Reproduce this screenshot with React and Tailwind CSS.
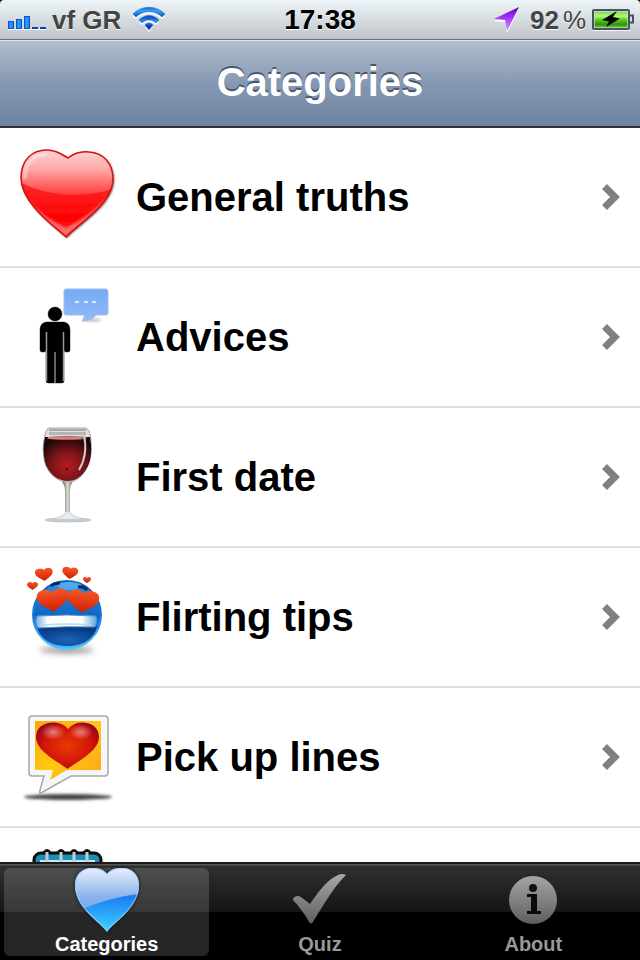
// src/App.jsx
import React, { useState } from "react";

const HEART = "M50 100 C40 88 0 64 0 32 C0 12 12 1 27 1 C38 1 46 6 51 15 C57 5 65 1 75 1 C90 2 100 14 100 32 C100 64 60 88 50 100Z";

const MiniHeart = ({ x, y, w, h, fill }) => (
  <svg x={x} y={y} width={w} height={h} viewBox="0 0 100 100" preserveAspectRatio="none">
    <path d={HEART} fill={fill} />
  </svg>
);

const HeartIcon = () => (
  <svg viewBox="0 0 96 96" className="w-24 h-24 overflow-visible" aria-hidden="true">
    <defs>
      <linearGradient id="heartBody" x1="0" y1="0" x2="0" y2="1">
        <stop offset="0" stopColor="#ff4040" />
        <stop offset="0.5" stopColor="#ff1c1c" />
        <stop offset="0.8" stopColor="#fd0000" />
        <stop offset="1" stopColor="#ff3030" />
      </linearGradient>
      <linearGradient id="heartShine" x1="0" y1="0" x2="0" y2="46" gradientUnits="userSpaceOnUse">
        <stop offset="0" stopColor="#ffd6d6" />
        <stop offset="0.45" stopColor="#ffa6a6" />
        <stop offset="1" stopColor="#ff3c3c" />
      </linearGradient>
      <clipPath id="heartClip">
        <path d="M46 88 C38 80 1 55 1 29 C1 11 12 1 27 1 C37 1 44 7 48 9 C53 5 60 2 69 3 C84 4 93 15 93 30 C93 55 58 75 46 88Z" />
      </clipPath>
      <filter id="heartShadow" x="-10%" y="-10%" width="125%" height="125%">
        <feDropShadow dx="1" dy="1" stdDeviation="0.8" floodColor="#300" floodOpacity="0.8" />
      </filter>
      <filter id="heartGlow">
        <feGaussianBlur stdDeviation="1.2" />
      </filter>
    </defs>
    <path
      d="M46 88 C38 80 1 55 1 29 C1 11 12 1 27 1 C37 1 44 7 48 9 C53 5 60 2 69 3 C84 4 93 15 93 30 C93 55 58 75 46 88Z"
      fill="url(#heartBody)"
      filter="url(#heartShadow)"
    />
    <g clipPath="url(#heartClip)">
      <path d="M0 0 H96 V38 C80 47 30 51 0 33Z" fill="url(#heartShine)" />
      <path
        d="M6 48 C20 66 34 72 46 79 C60 71 76 62 88 46 C80 64 60 76 46 87 C32 78 14 66 6 48Z"
        fill="#ff8c8c"
        opacity="0.7"
        filter="url(#heartGlow)"
      />
      <path d="M5 30 C4 15 13 5 27 5" fill="none" stroke="#fff" strokeWidth="3" opacity="0.5" filter="url(#heartGlow)" />
    </g>
    <path
      d="M46 88 C38 80 1 55 1 29 C1 11 12 1 27 1 C37 1 44 7 48 9 C53 5 60 2 69 3 C84 4 93 15 93 30 C93 55 58 75 46 88Z"
      fill="none"
      stroke="#d41212"
      strokeWidth="1.5"
    />
  </svg>
);

const AdviceIcon = () => (
  <svg viewBox="0 0 96 96" className="w-24 h-24 overflow-visible" aria-hidden="true">
    <defs>
      <linearGradient id="bubble" x1="0" y1="0" x2="0" y2="1">
        <stop offset="0" stopColor="#75abf3" />
        <stop offset="1" stopColor="#91bafa" />
      </linearGradient>
      <filter id="softShadow" x="-50%" y="-200%" width="200%" height="500%">
        <feGaussianBlur stdDeviation="1.5" />
      </filter>
    </defs>
    <ellipse cx="72" cy="31" rx="9" ry="1" fill="#999" filter="url(#softShadow)" />
    <path
      d="M46 0 H86 Q88 0 88 2 V24 Q88 26 86 26 H76 C73 30 69 32 62 32 Q65 29 64 26 H46 Q44 26 44 24 V2 Q44 0 46 0Z"
      fill="url(#bubble)"
      stroke="#9dbdf0"
      strokeWidth="1"
    />
    <path d="M55 13 h4 M64 13 h4 M72 13 h4" stroke="#dcecff" strokeWidth="2" />
    <g stroke="#999" strokeWidth="1" paintOrder="stroke">
      <circle cx="35" cy="25" r="7" />
      <path d="M26 33 H44 Q50 34 50 41 V61 Q50 63 48 63 H46 Q44 63 44 61 V92 Q44 94 41 94 H29 Q26 94 26 92 V61 Q26 63 24 63 H22 Q20 63 20 61 V41 Q20 34 26 33Z" />
    </g>
    <path d="M26.5 43 V92 M43.5 43 V92" stroke="#999" strokeWidth="1.5" />
    <path d="M35 63 V94" stroke="#666" strokeWidth="2" />
  </svg>
);

const WineIcon = () => (
  <svg viewBox="0 0 96 96" className="w-24 h-24 overflow-visible" aria-hidden="true">
    <defs>
      <radialGradient id="wine" cx="0.5" cy="0.65" r="0.65">
        <stop offset="0" stopColor="#b51c22" />
        <stop offset="0.5" stopColor="#7d1418" />
        <stop offset="1" stopColor="#1c0808" />
      </radialGradient>
      <linearGradient id="stem" x1="0" y1="0" x2="1" y2="0">
        <stop offset="0" stopColor="#55554f" />
        <stop offset="0.5" stopColor="#d8d8d2" />
        <stop offset="1" stopColor="#77776f" />
      </linearGradient>
    </defs>
    <ellipse cx="48" cy="91" rx="23" ry="2" fill="#c5ccd0" stroke="#b5bcc0" strokeWidth="0.7" />
    <path d="M32 90 Q44 88 47 82 H49 Q52 88 64 90" fill="#e6eaec" stroke="#b5bcc0" strokeWidth="0.7" />
    <path d="M42 52 H53 Q50 57 50 62 V83 H45 V62 Q45 57 42 52Z" fill="url(#stem)" />
    <path
      d="M29 -1 H66 Q69 0 70 5 C72 16 72 27 68 36 C64 47 56 53 48 53 C38 53 28 45 25 34 C22 23 23 12 26 3 Q27 -1 29 -1Z"
      fill="#dfdfdf"
      stroke="#a5a5a5"
      strokeWidth="1"
    />
    <path d="M25 8 H70 C73 25 70 35 65 42 C60 49 54 52 48 52 C37 52 28 44 25 33 C23 25 23 16 25 8Z" fill="url(#wine)" />
    <path d="M29 3 H66 V6 H29Z" fill="#b5b5b5" />
    <path d="M29 1 H66" stroke="#999" strokeWidth="1.5" />
    <ellipse cx="47" cy="9" rx="20" ry="2" fill="#b9575a" />
    <path d="M28 9 H61" stroke="#eab4b4" strokeWidth="1" />
    <path d="M64 6 C67 20 65 31 59 41" fill="none" stroke="#d6c8c8" strokeWidth="2" />
    <circle cx="47" cy="40" r="1.5" fill="#6a0508" />
  </svg>
);

const SmileyIcon = () => (
  <svg viewBox="0 0 96 96" className="w-24 h-24 overflow-visible" aria-hidden="true">
    <defs>
      <linearGradient id="face" x1="0" y1="0" x2="0" y2="1">
        <stop offset="0" stopColor="#2c8fe2" />
        <stop offset="0.5" stopColor="#0f66c6" />
        <stop offset="0.85" stopColor="#168bea" />
        <stop offset="1" stopColor="#4cc4ff" />
      </linearGradient>
      <linearGradient id="rim" x1="0" y1="0" x2="0" y2="1">
        <stop offset="0" stopColor="#1a62b4" />
        <stop offset="0.5" stopColor="#1b7edd" />
        <stop offset="1" stopColor="#4fc6ff" />
      </linearGradient>
      <radialGradient id="mouth" cx="0.5" cy="0.7" r="0.6">
        <stop offset="0" stopColor="#1a66b8" />
        <stop offset="1" stopColor="#0a3a86" />
      </radialGradient>
      <linearGradient id="love" x1="0" y1="0" x2="0" y2="1">
        <stop offset="0" stopColor="#f4572c" />
        <stop offset="0.5" stopColor="#e63a12" />
        <stop offset="1" stopColor="#c02408" />
      </linearGradient>
      <linearGradient id="teeth" x1="0" y1="0" x2="1" y2="0">
        <stop offset="0" stopColor="#6fb0e2" />
        <stop offset="0.2" stopColor="#fff" />
        <stop offset="0.75" stopColor="#fff" />
        <stop offset="1" stopColor="#5fa3dc" />
      </linearGradient>
      <filter id="faceShadow" x="-50%" y="-200%" width="200%" height="500%">
        <feGaussianBlur stdDeviation="3" />
      </filter>
    </defs>
    <ellipse cx="47" cy="81" rx="27" ry="3" fill="#888" filter="url(#faceShadow)" />
    <circle cx="47" cy="46" r="34" fill="url(#face)" stroke="url(#rim)" strokeWidth="2" />
    <ellipse cx="50" cy="17" rx="12" ry="4" fill="#5cb8f5" opacity="0.7" />
    <path d="M31 17 Q34 14 40 14 M58 18 Q64 17 67 21" fill="none" stroke="#082d5b" strokeWidth="3" />
    <path d="M17 57 C20 71 33 77 47 77 C61 77 74 71 77 57Z" fill="url(#mouth)" />
    <path d="M17 47 Q47 45 76 47 Q78 52 75 58 Q47 57 18 59 Q14 53 17 47Z" fill="url(#teeth)" stroke="#4f92cc" strokeWidth="1" />
    <path d="M23 56 Q47 54 71 56" fill="none" stroke="#bcd8ed" strokeWidth="1.5" />
    <g transform="rotate(-6 32 32)">
      <MiniHeart x="17" y="20" w="32" h="23" fill="url(#love)" />
    </g>
    <g transform="rotate(6 63 32)">
      <MiniHeart x="47" y="21" w="32" h="23" fill="url(#love)" />
    </g>
    <g transform="rotate(-6 24 5)">
      <MiniHeart x="15" y="-1" w="18" h="13" fill="url(#love)" />
    </g>
    <g transform="rotate(6 50 4)">
      <MiniHeart x="42" y="-2" w="16" h="12" fill="url(#love)" />
    </g>
    <MiniHeart x="7" y="13" w="11" h="8" fill="url(#love)" />
    <MiniHeart x="63" y="8" w="8" h="6" fill="url(#love)" />
  </svg>
);

const LinesIcon = () => (
  <svg viewBox="0 0 96 96" className="w-24 h-24 overflow-visible" aria-hidden="true">
    <defs>
      <linearGradient id="card" x1="0" y1="0" x2="1" y2="1">
        <stop offset="0" stopColor="#ffa50a" />
        <stop offset="0.5" stopColor="#ffc90f" />
        <stop offset="1" stopColor="#ffa21a" />
      </linearGradient>
      <radialGradient id="cardHeart" cx="0.5" cy="0.5" r="0.58">
        <stop offset="0" stopColor="#e63b04" />
        <stop offset="0.65" stopColor="#d31408" />
        <stop offset="1" stopColor="#960519" />
      </radialGradient>
      <radialGradient id="gloss">
        <stop offset="0" stopColor="#fff" stopOpacity="0.45" />
        <stop offset="1" stopColor="#fff" stopOpacity="0" />
      </radialGradient>
      <filter id="cardShadow" x="-20%" y="-200%" width="140%" height="500%">
        <feGaussianBlur stdDeviation="1.5" />
      </filter>
    </defs>
    <ellipse cx="48" cy="88" rx="44" ry="3" fill="#444" filter="url(#cardShadow)" />
    <path
      d="M12 7 H85 Q88 7 88 10 V63 Q88 67 85 67 H51 L21 84 Q19 85 20 81 L24 67 H12 Q9 67 9 64 V10 Q9 7 12 7Z"
      fill="#f4f6fa"
      stroke="#a8a8a8"
      strokeWidth="1.5"
    />
    <path d="M15 12 H81 V61 H47 L30 71 L33 61 H15Z" fill="url(#card)" />
    <MiniHeart x="16" y="13" w="63" h="47" fill="url(#cardHeart)" />
    <ellipse cx="33" cy="23" rx="12" ry="8" fill="url(#gloss)" />
    <ellipse cx="61" cy="23" rx="12" ry="8" fill="url(#gloss)" />
  </svg>
);

const NotebookIcon = () => (
  <svg viewBox="0 0 96 96" className="w-24 h-24 overflow-visible" aria-hidden="true">
    <rect x="14" y="4" width="67" height="86" rx="7" fill="#1d8fb5" stroke="#0a0a0a" strokeWidth="3" />
    <rect x="20" y="11" width="55" height="73" fill="#cfe3ea" />
    {[27, 41, 54, 67].map((x) => (
      <g key={x}>
        <path d={`M${x - 3} 4 Q${x} -1 ${x + 3} 4`} fill="none" stroke="#0a0a0a" strokeWidth="3" />
        <path d={`M${x} 3 V14`} stroke="#c5ced2" strokeWidth="3" />
      </g>
    ))}
  </svg>
);

const Chevron = () => (
  <svg viewBox="0 0 18 26" className="w-[18px] h-[26px] shrink-0" aria-hidden="true">
    <path d="M2.5 2.5 L13 13 L2.5 23.5" fill="none" stroke="#808080" strokeWidth="7" />
  </svg>
);

const SignalIcon = () => (
  <svg viewBox="0 0 38 16" className="w-[38px] h-4" aria-hidden="true">
    <defs>
      <linearGradient id="bar" x1="0" y1="0" x2="1" y2="0">
        <stop offset="0" stopColor="#1b7cf0" />
        <stop offset="0.5" stopColor="#28a0ff" />
        <stop offset="1" stopColor="#1670e8" />
      </linearGradient>
    </defs>
    <path d="M0 15.5 H38" stroke="#fff" strokeWidth="1" />
    <g fill="url(#bar)" stroke="#0a55c8" strokeWidth="1">
      <rect x="0.5" y="7.5" width="5" height="7" />
      <rect x="8.5" y="5.5" width="5" height="9" />
      <rect x="16.5" y="2.5" width="5" height="12" />
    </g>
    <path d="M24 14 h6 M32 14 h6" stroke="#0a3fc0" strokeWidth="2" />
  </svg>
);

const WAVES =
  "M0 7 C9 -2 23 -2 32 7 L29 10 C22 3 10 3 3 10Z M6 13 C12 7 20 7 26 13 L23 16 C19 12 13 12 9 16Z M12 18 Q16 14 20 18 L16 23Z";

const WifiIcon = () => (
  <svg viewBox="0 0 32 26" className="w-8 h-[26px]" aria-hidden="true">
    <defs>
      <linearGradient id="wifi" x1="0" y1="0" x2="0" y2="26" gradientUnits="userSpaceOnUse">
        <stop offset="0" stopColor="#0d5fd0" />
        <stop offset="0.15" stopColor="#3aa5f5" />
        <stop offset="0.38" stopColor="#0c4cc4" />
        <stop offset="0.55" stopColor="#2b93f4" />
        <stop offset="0.75" stopColor="#0838b4" />
        <stop offset="1" stopColor="#1668e0" />
      </linearGradient>
    </defs>
    <path d={WAVES} fill="#fff" transform="translate(0 2)" />
    <path d={WAVES} fill="url(#wifi)" stroke="#0d56c8" strokeWidth="0.5" />
  </svg>
);

const LocationIcon = () => (
  <svg viewBox="0 0 26 26" className="w-[26px] h-[26px]" aria-hidden="true">
    <defs>
      <linearGradient id="arrow" x1="0" y1="0" x2="0" y2="1">
        <stop offset="0" stopColor="#5c00c8" />
        <stop offset="0.45" stopColor="#a536f5" />
        <stop offset="1" stopColor="#d893ff" />
      </linearGradient>
    </defs>
    <path d="M25 2 L13 26 L11 15 L0 14Z" fill="#fff" />
    <path d="M25 0 L13 24 L11 13 L0 12Z" fill="url(#arrow)" />
  </svg>
);

const BatteryIcon = () => (
  <svg viewBox="0 0 42 22" className="w-[42px] h-[22px]" aria-hidden="true">
    <defs>
      <linearGradient id="charge" x1="0" y1="0" x2="0" y2="1">
        <stop offset="0" stopColor="#7ed957" />
        <stop offset="0.3" stopColor="#b4f77c" />
        <stop offset="0.5" stopColor="#62cf26" />
        <stop offset="0.8" stopColor="#37910b" />
        <stop offset="1" stopColor="#5cc425" />
      </linearGradient>
    </defs>
    <path d="M1 21 H38" stroke="#fff" strokeWidth="1.5" />
    <rect x="1" y="1" width="36" height="19" rx="1" fill="#e6ebee" stroke="#4b5068" strokeWidth="2" />
    <rect x="2.5" y="2.5" width="33" height="16" fill="url(#charge)" />
    <path d="M38 6.5 h3 v7 h-3" fill="none" stroke="#4b5068" strokeWidth="2" />
    <path d="M25 2 L10 11 L17 12.5 L14 18 L28 9.5 L21 8Z" fill="#050505" />
  </svg>
);

const TAB_HEART =
  "M32 64 C27 55 0 41 0 17 C0 7 7 0 17 0 C24 0 29 2 32 6 C35 2 40 0 47 0 C57 0 64 7 64 17 C64 41 37 55 32 64Z";

const TabHeartIcon = () => (
  <svg viewBox="0 0 64 64" className="w-16 h-16 overflow-visible" aria-hidden="true">
    <defs>
      <linearGradient id="tabTop" x1="0" y1="0" x2="0" y2="1">
        <stop offset="0" stopColor="#e8effc" />
        <stop offset="0.65" stopColor="#8cb3ea" />
        <stop offset="1" stopColor="#6aa9ec" />
      </linearGradient>
      <linearGradient id="tabBottom" x1="0" y1="26" x2="0" y2="64" gradientUnits="userSpaceOnUse">
        <stop offset="0" stopColor="#1b78ef" />
        <stop offset="0.5" stopColor="#2ba4f9" />
        <stop offset="1" stopColor="#44d4ff" />
      </linearGradient>
      <clipPath id="tabClip">
        <path d={TAB_HEART} />
      </clipPath>
      <filter id="tabShadow" x="-20%" y="-20%" width="140%" height="140%">
        <feDropShadow dx="0" dy="0" stdDeviation="2" floodColor="#000" floodOpacity="0.6" />
      </filter>
    </defs>
    <g filter="url(#tabShadow)">
      <g clipPath="url(#tabClip)">
        <path d="M0 0 H64 V64 H0Z" fill="url(#tabBottom)" />
        <path d="M0 0 H64 V26 C44 28 24 34 0 44Z" fill="url(#tabTop)" />
        <path d={TAB_HEART} fill="none" stroke="#9bd6fb" strokeWidth="2" opacity="0.7" />
      </g>
    </g>
  </svg>
);

const CheckIcon = () => (
  <svg viewBox="0 0 64 64" className="w-16 h-16" aria-hidden="true">
    <defs>
      <linearGradient id="grayTab" x1="0" y1="6" x2="0" y2="56" gradientUnits="userSpaceOnUse">
        <stop offset="0" stopColor="#a8a8a8" />
        <stop offset="1" stopColor="#5e5e5e" />
      </linearGradient>
    </defs>
    <path
      d="M5 32 Q5 28 11 28 C15 30 18 33 22 36 C30 24 40 11 50 7 Q54 5 58 7 C45 20 36 36 25 54 Q23 57 21 54 C16 45 11 38 5 32Z"
      fill="url(#grayTab)"
    />
  </svg>
);

const InfoIcon = () => (
  <svg viewBox="0 0 64 64" className="w-16 h-16" aria-hidden="true">
    <circle cx="32" cy="32" r="24" fill="url(#grayTab)" />
    <circle cx="32" cy="20" r="4" fill="#111" />
    <path d="M26 26 H36 V43 H40 V46 H26 V43 H30 V29 H26Z" fill="#0a0a0a" />
  </svg>
);

const categories = [
  { name: "General truths", Icon: HeartIcon },
  { name: "Advices", Icon: AdviceIcon },
  { name: "First date", Icon: WineIcon },
  { name: "Flirting tips", Icon: SmileyIcon },
  { name: "Pick up lines", Icon: LinesIcon },
  { name: "", Icon: NotebookIcon },
];

const tabs = [
  { name: "Categories", Icon: TabHeartIcon },
  { name: "Quiz", Icon: CheckIcon },
  { name: "About", Icon: InfoIcon },
];

const StatusBar = () => (
  <div className="bg-black shrink-0">
    <div className="h-10 px-2 grid grid-cols-[1fr_auto_1fr] items-center rounded-t bg-linear-to-b from-[#eef5f8] to-[#bfc5c8] border-b border-[#6a7073] text-[26px] leading-10 font-bold text-[#444] [text-shadow:0_1px_0_#fff]">
      <div className="flex items-center">
        <div className="pt-1 pr-1.5">
          <SignalIcon />
        </div>
        <span>vf GR</span>
        <div className="pl-3">
          <WifiIcon />
        </div>
      </div>
      <span className="text-[28px] text-black">17:38</span>
      <div className="flex items-center justify-end gap-1.5 -mr-0.5">
        <LocationIcon />
        <span className="flex gap-1 pl-1">
          92<span className="font-normal">%</span>
        </span>
        <BatteryIcon />
      </div>
    </div>
  </div>
);

const App = () => {
  const [active, setActive] = useState("Categories");

  return (
    <div className="h-screen flex flex-col overflow-hidden bg-white font-['Liberation_Sans',Arial,sans-serif]">
      <StatusBar />

      <header className="h-22 shrink-0 flex items-center justify-center pb-1 border-t border-t-[#dde2e8] border-b-2 border-b-[#2d3035] bg-linear-to-b from-[#b2becd] via-[#8598b3] to-[#6d83a1]">
        <h1 className="text-[40px] leading-12 font-bold text-white [text-shadow:0_-2px_0_#4a5668]">
          Categories
        </h1>
      </header>

      {/* Category list */}
      <ul className="flex-1 min-h-0 overflow-hidden">
        {categories.map(({ name, Icon }) => (
          <li key={name} className="border-b-2 border-[#e0e0e0]">
            <button
              type="button"
              aria-label={name || "Notebook"}
              className="w-full h-[138px] px-5 flex items-center gap-5 text-left"
            >
              <Icon />
              <span className="flex-1 text-[40px] leading-12 font-bold text-black">{name}</span>
              <Chevron />
            </button>
          </li>
        ))}
      </ul>

      {/* Tab bar */}
      <nav className="shrink-0 grid grid-cols-3 border-t-2 border-[#1a1a1a] bg-[linear-gradient(to_bottom,#555_0,#555_1px,#303030_2px,#151515_48px,#000_48px)]">
        {tabs.map(({ name, Icon }) => (
          <div key={name} className="p-1">
            <button
              type="button"
              onClick={() => setActive(name)}
              className={`w-full flex flex-col items-center rounded-md text-[20px] leading-6 font-bold ${
                active === name ? "bg-white/15 text-white" : "text-[#999]"
              }`}
            >
              <Icon />
              <span>{name}</span>
            </button>
          </div>
        ))}
      </nav>
    </div>
  );
};

export default App;
